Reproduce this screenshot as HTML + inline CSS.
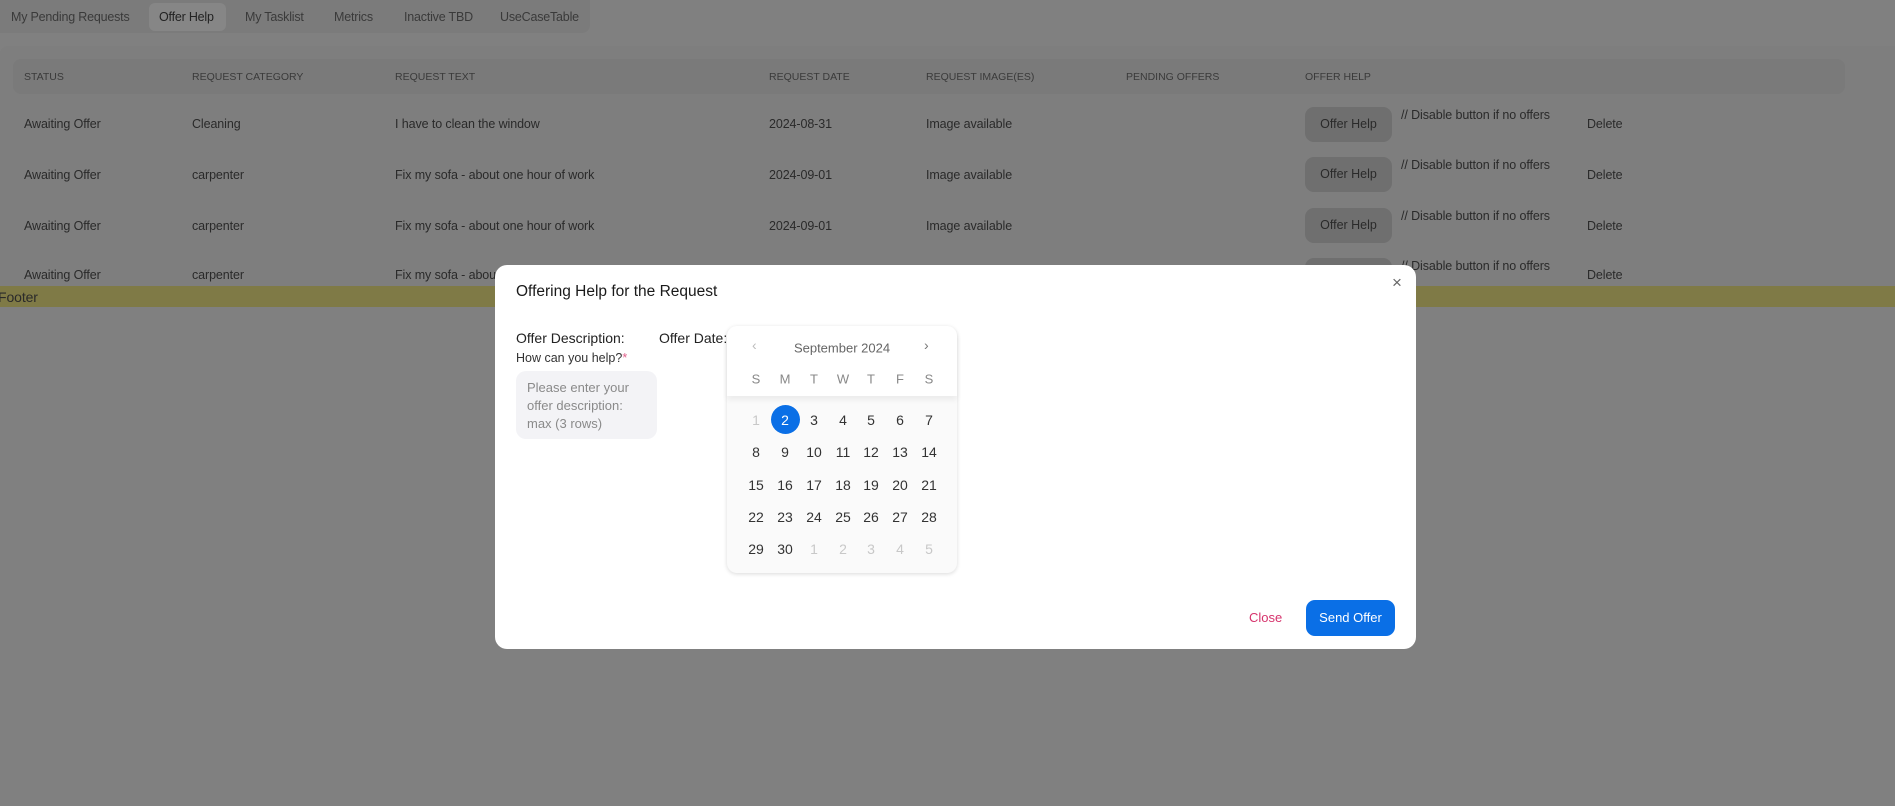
<!DOCTYPE html>
<html><head><meta charset="utf-8"><style>
*{box-sizing:border-box;margin:0;padding:0}
body{width:1895px;height:806px;background:#808080;font-family:"Liberation Sans",sans-serif;position:relative;overflow:hidden;color:#2b2b2b}
.a{position:absolute;white-space:nowrap}
.t{font-size:12.5px;color:#3a3a3a;letter-spacing:-0.2px}
.h{font-size:10.5px;color:#3a3a3a}
.r{font-size:12.5px;color:#2a2a2a;letter-spacing:-0.1px}
.btn{position:absolute;width:87px;height:35px;border-radius:9px;background:#6f6f6f;font-size:12.5px;color:#2a2a2a;text-align:center;line-height:35px}
.d{position:absolute;width:29px;text-align:center;font-size:14px;color:#333;transform:translate(-50%,-50%)}
.g{color:#c8c8c8}
.w{position:absolute;font-size:13px;color:#888;transform:translate(-50%,-50%)}
</style></head><body>
<div class="a" style="left:0;top:0;width:590px;height:33px;background:#7b7b7b;border-radius:0 0 8px 0"></div>
<div class="a" style="left:149px;top:3px;width:77px;height:28px;background:#868686;border-radius:6px"></div>
<div class="a t" style="left:11px;top:10px">My Pending Requests</div>
<div class="a t" style="left:159px;top:10px;color:#222">Offer Help</div>
<div class="a t" style="left:245px;top:10px">My Tasklist</div>
<div class="a t" style="left:334px;top:10px">Metrics</div>
<div class="a t" style="left:404px;top:10px">Inactive TBD</div>
<div class="a t" style="left:500px;top:10px">UseCaseTable</div>
<div class="a" style="left:0;top:46px;width:1895px;height:240px;background:#7e7e7e;border-radius:8px 0 0 0"></div>
<div class="a" style="left:13px;top:59px;width:1832px;height:35px;background:#7a7a7a;border-radius:8px"></div>
<div class="a h" style="left:24px;top:71px">STATUS</div>
<div class="a h" style="left:192px;top:71px">REQUEST CATEGORY</div>
<div class="a h" style="left:395px;top:71px">REQUEST TEXT</div>
<div class="a h" style="left:769px;top:71px">REQUEST DATE</div>
<div class="a h" style="left:926px;top:71px">REQUEST IMAGE(ES)</div>
<div class="a h" style="left:1126px;top:71px">PENDING OFFERS</div>
<div class="a h" style="left:1305px;top:71px">OFFER HELP</div>

<div class="a r" style="left:24px;top:117px">Awaiting Offer</div><div class="a r" style="left:192px;top:117px">Cleaning</div><div class="a r" style="left:395px;top:117px">I have to clean the window</div><div class="a r" style="left:769px;top:117px">2024-08-31</div><div class="a r" style="left:926px;top:117px">Image available</div>
<div class="btn" style="left:1305px;top:107px">Offer Help</div><div class="a r" style="left:1401px;top:108px">// Disable button if no offers</div><div class="a r" style="left:1587px;top:117px">Delete</div>

<div class="a r" style="left:24px;top:168px">Awaiting Offer</div><div class="a r" style="left:192px;top:168px">carpenter</div><div class="a r" style="left:395px;top:168px">Fix my sofa - about one hour of work</div><div class="a r" style="left:769px;top:168px">2024-09-01</div><div class="a r" style="left:926px;top:168px">Image available</div>
<div class="btn" style="left:1305px;top:157px">Offer Help</div><div class="a r" style="left:1401px;top:158px">// Disable button if no offers</div><div class="a r" style="left:1587px;top:168px">Delete</div>

<div class="a r" style="left:24px;top:219px">Awaiting Offer</div><div class="a r" style="left:192px;top:219px">carpenter</div><div class="a r" style="left:395px;top:219px">Fix my sofa - about one hour of work</div><div class="a r" style="left:769px;top:219px">2024-09-01</div><div class="a r" style="left:926px;top:219px">Image available</div>
<div class="btn" style="left:1305px;top:208px">Offer Help</div><div class="a r" style="left:1401px;top:209px">// Disable button if no offers</div><div class="a r" style="left:1587px;top:219px">Delete</div>

<div class="a" style="left:0;top:258px;width:1895px;height:28px;overflow:hidden">
<div class="a r" style="left:24px;top:10px">Awaiting Offer</div><div class="a r" style="left:192px;top:10px">carpenter</div><div class="a r" style="left:395px;top:10px">Fix my sofa - about one hour of work</div>
<div class="btn" style="left:1305px;top:0">Offer Help</div><div class="a r" style="left:1401px;top:1px">// Disable button if no offers</div><div class="a r" style="left:1587px;top:10px">Delete</div></div>
<div class="a" style="left:0;top:286px;width:1895px;height:21px;background:#7f7a46"></div>
<div class="a r" style="left:-2px;top:289px;font-size:14px">Footer</div>

<div class="a" style="left:495px;top:265px;width:921px;height:384px;background:#fff;border-radius:12px"></div>
<div class="a" style="left:516px;top:283px;font-size:15.5px;color:#1a1a1a">Offering Help for the Request</div>
<div class="a" style="left:1392px;top:273px;font-size:17px;color:#666">×</div>
<div class="a" style="left:516px;top:330px;font-size:14px;color:#222">Offer Description:</div>
<div class="a" style="left:516px;top:351px;font-size:12.5px;color:#333">How can you help?<span style="color:#e0608a">*</span></div>
<div class="a" style="left:516px;top:371px;width:141px;height:68px;background:#f3f3f6;border-radius:10px;padding:8px 11px;font-size:13px;line-height:18px;color:#8a8a8a;white-space:normal">Please enter your offer description: max (3 rows)</div>
<div class="a" style="left:659px;top:330px;font-size:14px;color:#222">Offer Date:</div>

<div class="a" style="left:727px;top:326px;width:230px;height:247px;background:#fafafa;border-radius:10px;box-shadow:0 1px 4px rgba(0,0,0,.15)"></div>
<div class="a" style="left:727px;top:326px;width:230px;height:70px;background:#fff;border-radius:10px 10px 0 0;box-shadow:0 4px 6px rgba(0,0,0,.06)"></div>
<div class="a" style="left:752px;top:337px;font-size:14px;color:#bbb">‹</div>
<div class="a" style="left:924px;top:337px;font-size:14px;color:#777">›</div>
<div class="a" style="left:842px;top:348px;font-size:13px;color:#666;transform:translate(-50%,-50%)">September 2024</div>
<div class="w" style="left:756px;top:379px">S</div><div class="w" style="left:785px;top:379px">M</div><div class="w" style="left:814px;top:379px">T</div><div class="w" style="left:843px;top:379px">W</div><div class="w" style="left:871px;top:379px">T</div><div class="w" style="left:900px;top:379px">F</div><div class="w" style="left:929px;top:379px">S</div>
<div class="a" style="left:771px;top:405px;width:29px;height:29px;border-radius:50%;background:#0a6fe6"></div>
<div class="d g" style="left:756px;top:420px">1</div><div class="d" style="left:785px;top:420px;color:#fff">2</div><div class="d" style="left:814px;top:420px">3</div><div class="d" style="left:843px;top:420px">4</div><div class="d" style="left:871px;top:420px">5</div><div class="d" style="left:900px;top:420px">6</div><div class="d" style="left:929px;top:420px">7</div>
<div class="d" style="left:756px;top:452px">8</div><div class="d" style="left:785px;top:452px">9</div><div class="d" style="left:814px;top:452px">10</div><div class="d" style="left:843px;top:452px">11</div><div class="d" style="left:871px;top:452px">12</div><div class="d" style="left:900px;top:452px">13</div><div class="d" style="left:929px;top:452px">14</div>
<div class="d" style="left:756px;top:485px">15</div><div class="d" style="left:785px;top:485px">16</div><div class="d" style="left:814px;top:485px">17</div><div class="d" style="left:843px;top:485px">18</div><div class="d" style="left:871px;top:485px">19</div><div class="d" style="left:900px;top:485px">20</div><div class="d" style="left:929px;top:485px">21</div>
<div class="d" style="left:756px;top:517px">22</div><div class="d" style="left:785px;top:517px">23</div><div class="d" style="left:814px;top:517px">24</div><div class="d" style="left:843px;top:517px">25</div><div class="d" style="left:871px;top:517px">26</div><div class="d" style="left:900px;top:517px">27</div><div class="d" style="left:929px;top:517px">28</div>
<div class="d" style="left:756px;top:549px">29</div><div class="d" style="left:785px;top:549px">30</div><div class="d g" style="left:814px;top:549px">1</div><div class="d g" style="left:843px;top:549px">2</div><div class="d g" style="left:871px;top:549px">3</div><div class="d g" style="left:900px;top:549px">4</div><div class="d g" style="left:929px;top:549px">5</div>

<div class="a" style="left:1249px;top:610px;font-size:13px;color:#d6336c">Close</div>
<div class="a" style="left:1306px;top:600px;width:89px;height:36px;background:#0a6fe6;border-radius:9px;color:#fff;font-size:13px;text-align:center;line-height:36px">Send Offer</div>
</body></html>
